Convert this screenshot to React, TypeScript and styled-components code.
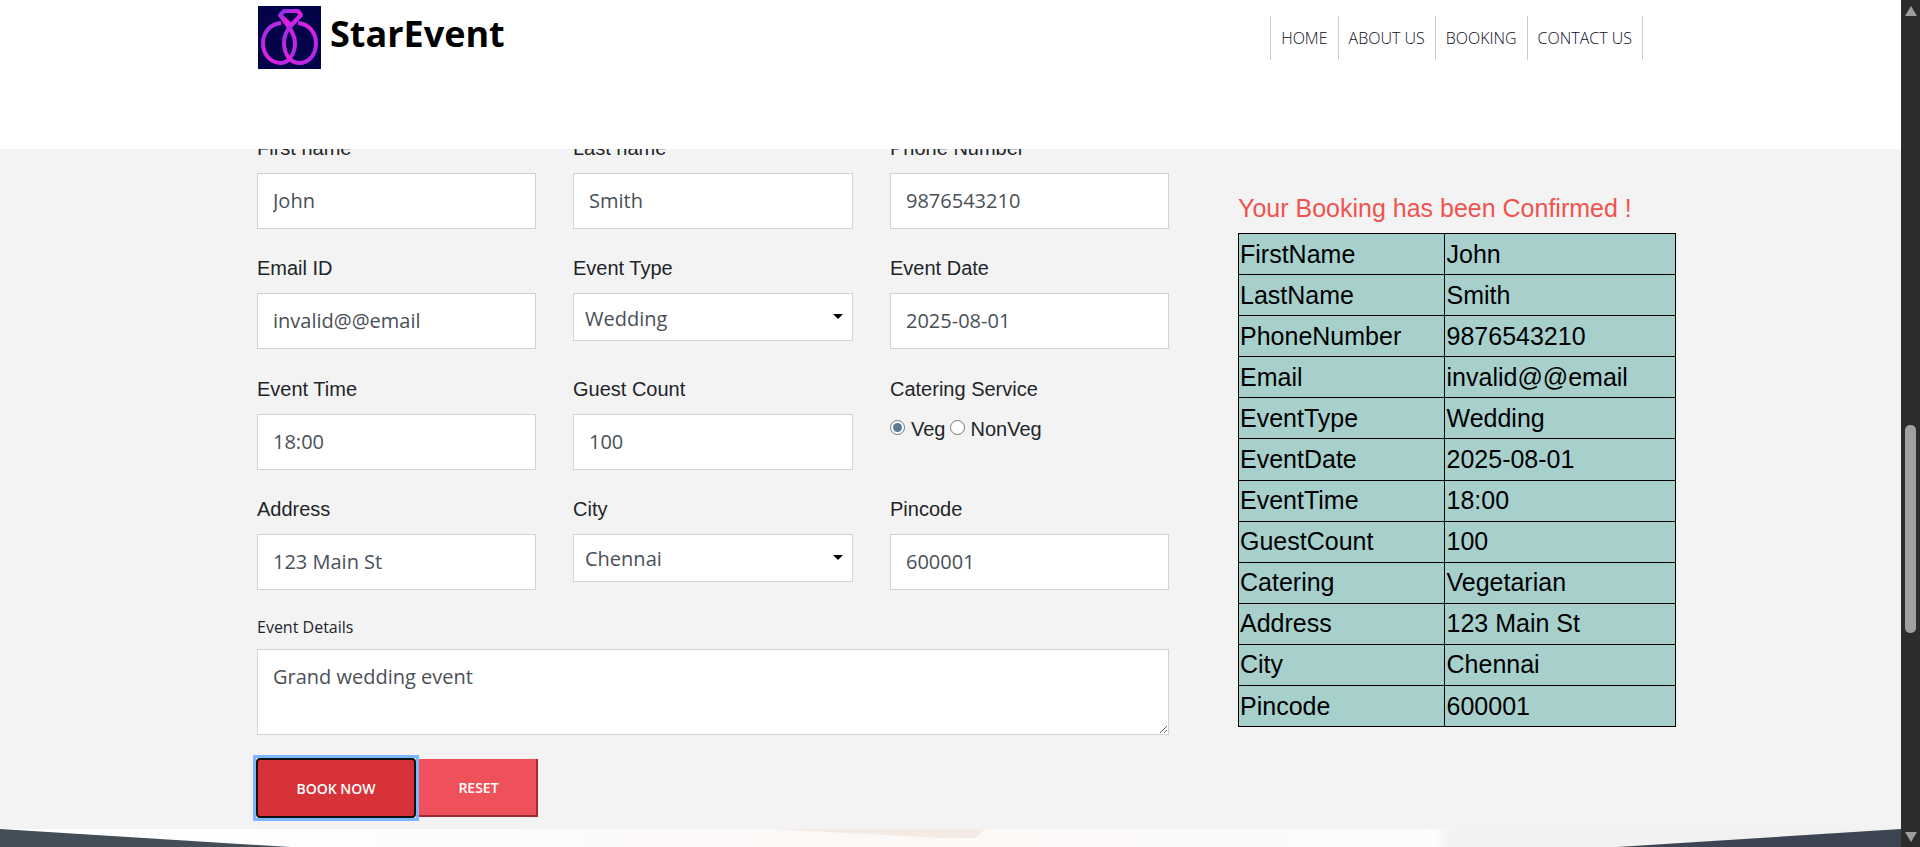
import React from 'react';
import styled, { createGlobalStyle } from 'styled-components';

const GlobalStyle = createGlobalStyle`
    html, body {
        margin: 0;
        padding: 0;
        height: 847px;
        overflow: hidden;
        background: #f3f3f3;
    }
    * {
        box-sizing: border-box;
    }
`;

const Shell = styled.div`
    display: flex;
    width: 1920px;
    height: 847px;
`;

const Page = styled.div`
    display: flex;
    flex-direction: column;
    flex: 1;
    min-width: 0;
`;

const Header = styled.header`
    display: flex;
    align-items: flex-start;
    justify-content: space-between;
    height: 149px;
    padding: 6px 258px 0 258px;
    background: #fff;
`;

const Brand = styled.a`
    display: flex;
    align-items: flex-start;
    gap: 9px;
    font-family: 'Open Sans', sans-serif;
    font-weight: 700;
    font-size: 36px;
    line-height: 56px;
    color: #000;
`;

const NavList = styled.ul`
    display: flex;
    list-style: none;
    margin: 10px 0 0;
    padding: 0;
    border-right: 1px solid #ccc;
`;

const NavItem = styled.li`
    height: 44px;
    padding: 0 10px;
    border-left: 1px solid #ccc;
    font-family: 'Open Sans', sans-serif;
    font-weight: 300;
    font-size: 16px;
    line-height: 44px;
    color: #0a0a1a;
`;

const Main = styled.main`
    display: flex;
    flex: 1;
    min-height: 0;
    overflow: hidden;
    padding-left: 257px;
`;

const Form = styled.form`
    width: 912px;
    margin-top: -11px;
    flex-shrink: 0;
`;

const FieldGrid = styled.div`
    display: grid;
    grid-template-columns: 279px 280px 279px;
    column-gap: 37px;
    row-gap: 29.33px;
`;

const Field = styled.div`
    display: flex;
    flex-direction: column;
`;

const Label = styled.label`
    height: 21px;
    margin-bottom: 14px;
    font-family: 'Liberation Sans', sans-serif;
    font-size: 20px;
    line-height: 21px;
    color: #212529;
`;

const TextInput = styled.input`
    width: 100%;
    height: 56px;
    padding: 0 15px 1px;
    border: 1px solid #ced4da;
    border-radius: 0;
    outline: none;
    background: #fff;
    font-family: 'Open Sans', sans-serif;
    font-size: 20px;
    color: #495057;
`;

const SelectWrap = styled.div`
    position: relative;

    &::after {
        content: '';
        position: absolute;
        top: 21px;
        right: 10px;
        border-left: 5px solid transparent;
        border-right: 5px solid transparent;
        border-top: 5px solid #000;
    }
`;

const Select = styled.select`
    display: block;
    width: 100%;
    height: 48px;
    padding: 2px 11px 0;
    border: 1px solid #ced4da;
    border-radius: 0;
    outline: none;
    appearance: none;
    background: #fff;
    font-family: 'Open Sans', sans-serif;
    font-size: 20px;
    color: #495057;
`;

const RadioRow = styled.div`
    display: flex;
    align-items: center;
    height: 31px;
    font-family: 'Liberation Sans', sans-serif;
    font-size: 20px;
    color: #212529;
`;

const Radio = styled.input`
    width: 15px;
    height: 15px;
    margin: 0 6px 3px 0;
    accent-color: #5f7a8f;

    &:not(:first-child) {
        margin-left: 5px;
        margin-right: 5px;
    }
`;

const DetailsField = styled(Field)`
    margin-top: 25px;
`;

const SmallLabel = styled.label`
    height: 24px;
    margin-bottom: 10px;
    font-family: 'Open Sans', sans-serif;
    font-size: 16px;
    line-height: 24px;
    color: #212529;
`;

const TextArea = styled.textarea`
    display: block;
    width: 100%;
    height: 86px;
    padding: 12px 15px;
    border: 1px solid #ced4da;
    border-radius: 0;
    outline: none;
    background: #fff;
    font-family: 'Open Sans', sans-serif;
    font-size: 20px;
    line-height: 30px;
    color: #495057;
`;

const ButtonRow = styled.div`
    display: flex;
    align-items: center;
    margin: 20px 0 0 -4px;
`;

const FocusRing = styled.div`
    width: 166px;
    height: 66px;
    border: 3px solid #7ab7ff;
    background: #fff;
`;

const BookButton = styled.button`
    display: block;
    width: 160px;
    height: 60px;
    padding-top: 3px;
    border: 2px solid #111;
    border-radius: 4px;
    background: #d63238;
    color: #fff;
    font-family: 'Open Sans', sans-serif;
    font-weight: 600;
    font-size: 14px;
`;

const ResetButton = styled.button`
    width: 119px;
    height: 58px;
    border: none;
    box-shadow: inset -2px -2px 0 #a02d36;
    background: #ef515b;
    color: #fff;
    font-family: 'Open Sans', sans-serif;
    font-weight: 600;
    font-size: 14px;
`;

const Summary = styled.aside`
    margin: 43px 0 0 69px;
`;

const SummaryTitle = styled.h3`
    margin: 0 0 9px;
    font-family: 'Liberation Sans', sans-serif;
    font-weight: 400;
    font-size: 25px;
    line-height: 32px;
    color: #ef5350;
`;

const SummaryTable = styled.table`
    width: 438px;
    border-collapse: collapse;
    background: #a7d0cd;
    font-family: 'Liberation Sans', sans-serif;
    font-size: 25px;
    color: #000;
`;

const Cell = styled.td<{ $wide?: boolean }>`
    width: ${(p) => (p.$wide ? '232px' : '206px')};
    height: 41.1px;
    padding: 0 1px 0 ${(p) => (p.$wide ? '2px' : '1px')};
    border: 1px solid #000;
`;

const Footer = styled.footer`
    height: 18px;
    flex-shrink: 0;
    line-height: 0;
`;

const FooterArt = styled.svg`
    display: block;
    width: 100%;
    height: 18px;
`;

const ScrollRail = styled.div`
    display: flex;
    flex-direction: column;
    align-items: center;
    width: 19px;
    height: 847px;
    padding: 6px 0 5px;
    background: #2c2c2c;
`;

const ScrollArrow = styled.div<{ $down?: boolean }>`
    width: 0;
    height: 0;
    border-left: 6px solid transparent;
    border-right: 6px solid transparent;
    ${(p) => (p.$down ? 'border-top: 10px solid #9e9e9e;' : 'border-bottom: 10px solid #9e9e9e;')}
`;

const ScrollThumb = styled.div`
    width: 11px;
    height: 208px;
    margin: 409px 0 auto;
    border-radius: 5px;
    background: #a0a0a0;
`;

const Logo = () => (
    <svg width="63" height="63" viewBox="0 0 63 63" style={{ display: 'block' }}>
        <defs>
            <linearGradient id="ring" x1="0" y1="0" x2="1" y2="1">
                <stop offset="0" stopColor="#7a35e6" />
                <stop offset="0.5" stopColor="#e51fe0" />
                <stop offset="1" stopColor="#a82ae8" />
            </linearGradient>
        </defs>
        <rect width="63" height="63" fill="#03034a" />
        <g fill="none" stroke="url(#ring)" strokeWidth="4" strokeLinejoin="round">
            <path d="M23 17C11 18 5 28 5 37C5 50 14 57 23 57C32 57 37 46 37 37C37 30 33 24 30 20L22 9" />
            <path d="M40 17C52 18 58 28 58 37C58 50 50 57 41 57C31 57 26 46 26 37C26 30 29 24 33 20L43 9" />
            <path d="M22 9L26 5H40L43 9L33 19Z" />
        </g>
    </svg>
);

const summaryRows: [string, string][] = [
    ['FirstName', 'John'],
    ['LastName', 'Smith'],
    ['PhoneNumber', '9876543210'],
    ['Email', 'invalid@@email'],
    ['EventType', 'Wedding'],
    ['EventDate', '2025-08-01'],
    ['EventTime', '18:00'],
    ['GuestCount', '100'],
    ['Catering', 'Vegetarian'],
    ['Address', '123 Main St'],
    ['City', 'Chennai'],
    ['Pincode', '600001'],
];

const navLinks = ['HOME', 'ABOUT US', 'BOOKING', 'CONTACT US'];

const App: React.FC = () => {
    return (
        <Shell>
            <GlobalStyle />
            <Page>
                <Header>
                    <Brand>
                        <Logo />
                        StarEvent
                    </Brand>
                    <NavList>
                        {navLinks.map((link) => (
                            <NavItem key={link}>{link}</NavItem>
                        ))}
                    </NavList>
                </Header>
                <Main>
                    <Form>
                        <FieldGrid>
                            <Field>
                                <Label>First name</Label>
                                <TextInput type="text" defaultValue="John" />
                            </Field>
                            <Field>
                                <Label>Last name</Label>
                                <TextInput type="text" defaultValue="Smith" />
                            </Field>
                            <Field>
                                <Label>Phone Number</Label>
                                <TextInput type="text" defaultValue="9876543210" />
                            </Field>
                            <Field>
                                <Label>Email ID</Label>
                                <TextInput type="text" defaultValue="invalid@@email" />
                            </Field>
                            <Field>
                                <Label>Event Type</Label>
                                <SelectWrap>
                                    <Select defaultValue="Wedding">
                                        <option>Wedding</option>
                                    </Select>
                                </SelectWrap>
                            </Field>
                            <Field>
                                <Label>Event Date</Label>
                                <TextInput type="text" defaultValue="2025-08-01" />
                            </Field>
                            <Field>
                                <Label>Event Time</Label>
                                <TextInput type="text" defaultValue="18:00" />
                            </Field>
                            <Field>
                                <Label>Guest Count</Label>
                                <TextInput type="text" defaultValue="100" />
                            </Field>
                            <Field>
                                <Label>Catering Service</Label>
                                <RadioRow>
                                    <Radio type="radio" name="catering" defaultChecked />
                                    Veg
                                    <Radio type="radio" name="catering" />
                                    NonVeg
                                </RadioRow>
                            </Field>
                            <Field>
                                <Label>Address</Label>
                                <TextInput type="text" defaultValue="123 Main St" />
                            </Field>
                            <Field>
                                <Label>City</Label>
                                <SelectWrap>
                                    <Select defaultValue="Chennai">
                                        <option>Chennai</option>
                                    </Select>
                                </SelectWrap>
                            </Field>
                            <Field>
                                <Label>Pincode</Label>
                                <TextInput type="text" defaultValue="600001" />
                            </Field>
                        </FieldGrid>
                        <DetailsField>
                            <SmallLabel>Event Details</SmallLabel>
                            <TextArea defaultValue="Grand wedding event" />
                        </DetailsField>
                        <ButtonRow>
                            <FocusRing>
                                <BookButton type="button">BOOK NOW</BookButton>
                            </FocusRing>
                            <ResetButton type="button">RESET</ResetButton>
                        </ButtonRow>
                    </Form>
                    <Summary>
                        <SummaryTitle>Your Booking has been Confirmed !</SummaryTitle>
                        <SummaryTable>
                            <tbody>
                                {summaryRows.map(([name, value]) => (
                                    <tr key={name}>
                                        <Cell>{name}</Cell>
                                        <Cell $wide>{value}</Cell>
                                    </tr>
                                ))}
                            </tbody>
                        </SummaryTable>
                    </Summary>
                </Main>
                <Footer>
                    <FooterArt viewBox="0 0 1901 18" preserveAspectRatio="none">
                        <defs>
                            <linearGradient id="sky" x1="0" y1="0" x2="1" y2="0">
                                <stop offset="0" stopColor="#ffffff" />
                                <stop offset="0.2" stopColor="#fefdfd" />
                                <stop offset="0.45" stopColor="#fbf8f6" />
                                <stop offset="0.755" stopColor="#fdfcfb" />
                                <stop offset="0.762" stopColor="#f3f3f3" />
                                <stop offset="1" stopColor="#f1f1f1" />
                            </linearGradient>
                        </defs>
                        <rect width="1901" height="18" fill="url(#sky)" />
                        <polygon points="770,0 985,0 975,9 940,9" fill="#f4ebe5" />
                        <polygon points="0,0 290,18 0,18" fill="#434e58" />
                        <polygon points="1901,0 1617,18 1901,18" fill="#3c4551" />
                    </FooterArt>
                </Footer>
            </Page>
            <ScrollRail>
                <ScrollArrow />
                <ScrollThumb />
                <ScrollArrow $down />
            </ScrollRail>
        </Shell>
    );
};

export default App;
